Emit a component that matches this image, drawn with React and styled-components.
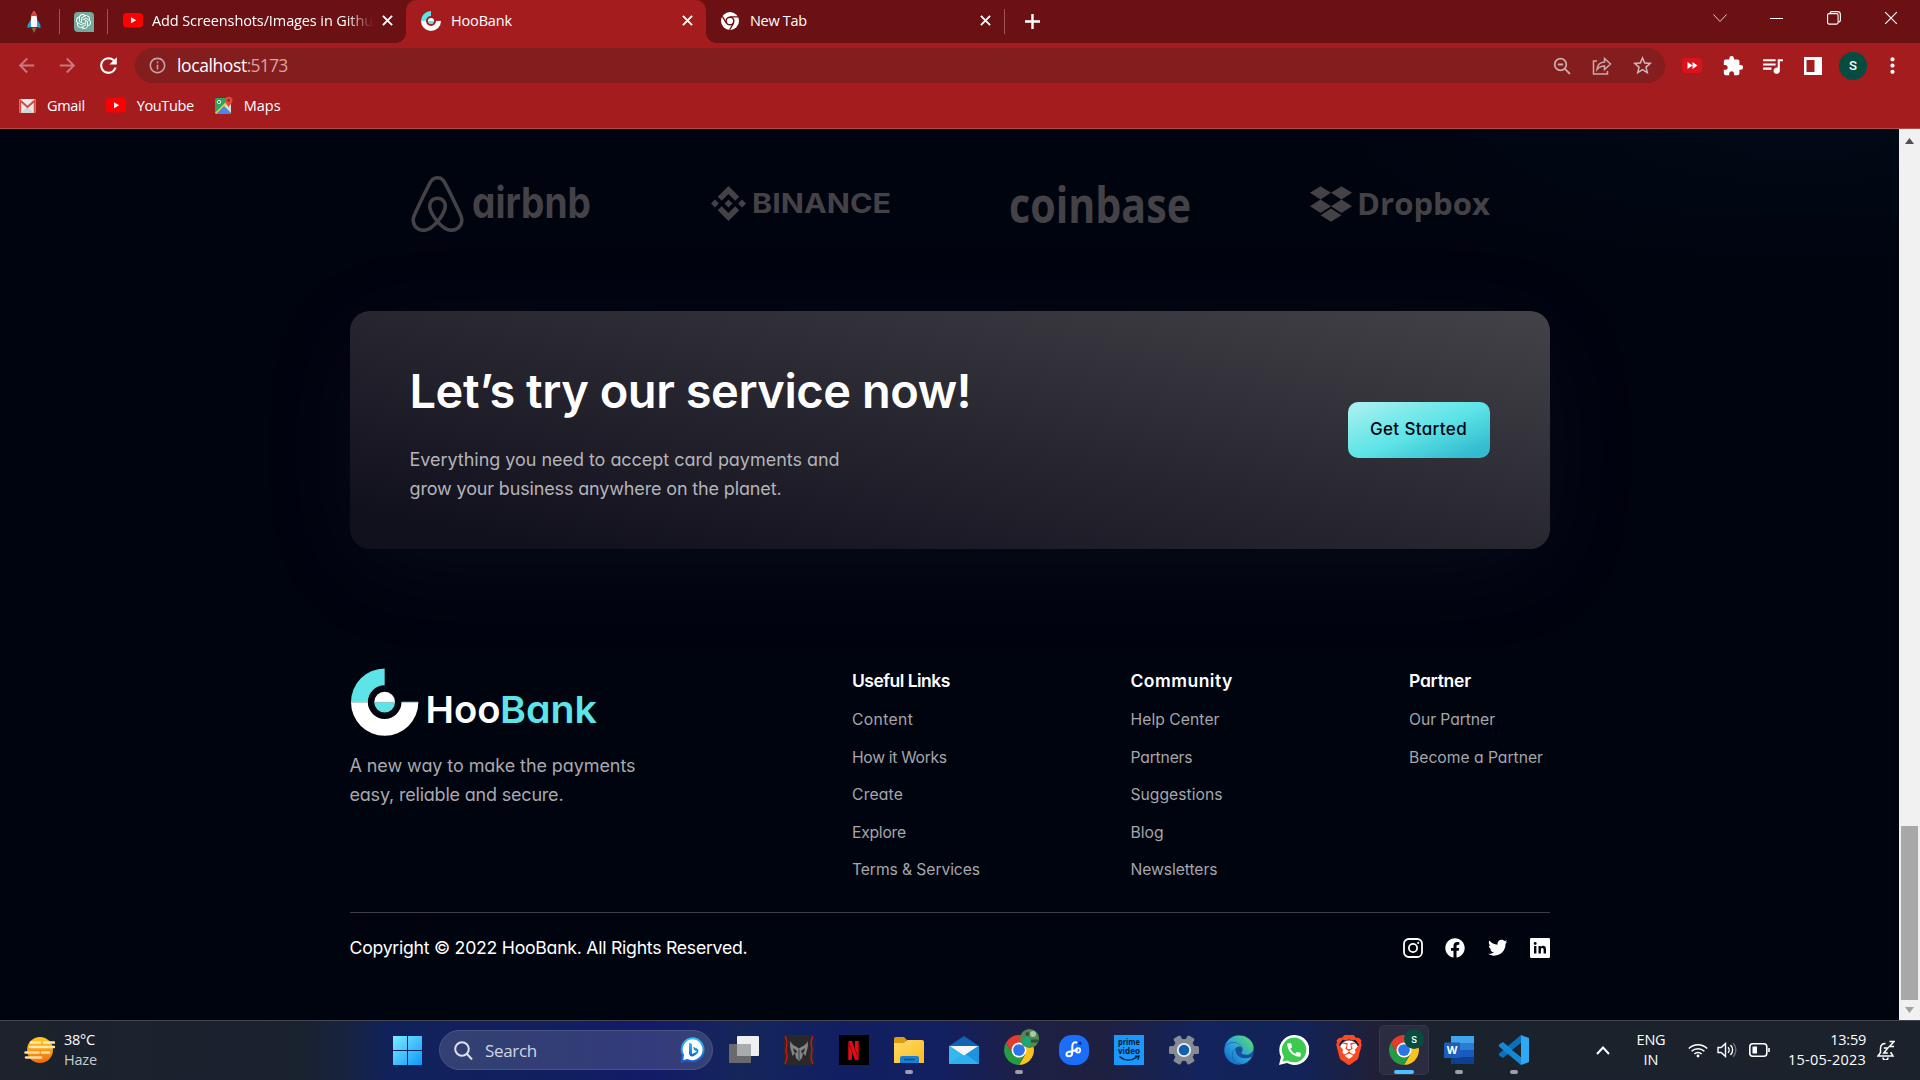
import React, { useLayoutEffect, useRef } from "react";
import styled, { createGlobalStyle, css } from "styled-components";
import {
  MdArrowBack, MdArrowForward, MdRefresh, MdInfoOutline, MdStarBorder,
  MdExtension, MdQueueMusic, MdMoreVert, MdCall,
} from "react-icons/md";
import { FaEdge, FaFacebook, FaTwitter } from "react-icons/fa";
import { SiAirbnb, SiBinance, SiDropbox, SiNetflix, SiBrave, SiOpenai } from "react-icons/si";

const brandFont = `Inter, "Open Sans", sans-serif`;
const systemFont = `"Open Sans", "Noto Sans", sans-serif`;

const GlobalStyle = createGlobalStyle`
  * { box-sizing: border-box; }
  html, body { margin: 0; padding: 0; background: #00040f; overflow: hidden; }
  svg { display: block; flex: none; }
  h1, h2, p, ul { margin: 0; padding: 0; }
`;

/* ---------- text set to a fixed measure ---------- */
const FitSpan = styled.span`
  display: inline-block;
  white-space: pre;
`;

function Fit({ w, children }) {
  const ref = useRef(null);
  useLayoutEffect(() => {
    const el = ref.current;
    el.style.letterSpacing = "0px";
    const natural = el.getBoundingClientRect().width;
    el.style.letterSpacing = `${(w - natural) / Math.max(1, children.length - 0.5)}px`;
  }, [w, children]);
  return <FitSpan ref={ref}>{children}</FitSpan>;
}

/* ---------- window ---------- */
const Screen = styled.div`
  width: 1920px;
  height: 1080px;
  display: flex;
  flex-direction: column;
  overflow: hidden;
  font-family: ${systemFont};
  color: #fff;
`;

const Slot = styled.div`
  width: ${(p) => p.$w}px;
  height: ${(p) => (p.$h ? `${p.$h}px` : "auto")};
  flex: none;
  display: flex;
  align-items: center;
  justify-content: center;
`;

/* ---------- tab strip ---------- */
const TabStrip = styled.div`
  height: 43px;
  flex: none;
  display: flex;
  align-items: center;
  padding-left: 9px;
  background: #6b1113;
`;

const Divider = styled.div`
  width: 1px;
  height: 25px;
  flex: none;
  background: #9c5658;
`;

const Tab = styled.div`
  position: relative;
  width: ${(p) => p.$w}px;
  height: 43px;
  flex: none;
  display: flex;
  align-items: center;
  gap: ${(p) => p.$gap || 9}px;
  padding: 0 13px 2px 15px;
  font-size: 14.5px;
  ${(p) => p.$active && css`
    background: #a51c1f;
    border-radius: 10px 10px 0 0;
    &::before, &::after {
      content: "";
      position: absolute;
      bottom: 0;
      width: 10px;
      height: 10px;
    }
    &::before { left: -10px; background: radial-gradient(circle at 0 0, transparent 9.5px, #a51c1f 10px); }
    &::after { right: -10px; background: radial-gradient(circle at 100% 0, transparent 9.5px, #a51c1f 10px); }
  `}
`;

const TabLabel = styled.div`
  flex: 1;
  overflow: hidden;
  white-space: nowrap;
  ${(p) => p.$fade && css`mask-image: linear-gradient(90deg, #000 88%, transparent 100%);`}
`;

const WindowControls = styled.div`
  display: flex;
  margin-left: auto;
  padding: 0 1px 7px 0;
`;

/* ---------- toolbar ---------- */
const Toolbar = styled.div`
  height: 45px;
  flex: none;
  display: flex;
  align-items: center;
  padding-left: 6px;
  background: #a51c1f;
`;

const Omnibox = styled.div`
  width: 1530px;
  height: 35px;
  margin: 0 7px 0 7px;
  padding: 0 3px 0 13px;
  display: flex;
  align-items: center;
  border-radius: 18px;
  background: #841d1e;
`;

const Address = styled.div`
  flex: 1;
  display: flex;
  margin-left: 10px;
  padding-bottom: 1px;
  font-size: 17.5px;
`;

const Port = styled.span`color: #d3a5a5;`;

const Avatar = styled.div`
  width: ${(p) => p.$size}px;
  height: ${(p) => p.$size}px;
  border-radius: 50%;
  display: flex;
  align-items: center;
  justify-content: center;
  background: #054d40;
  color: #fff;
  font: 500 ${(p) => p.$size * 0.47}px Roboto, sans-serif;
`;

const Bookmarks = styled.div`
  height: 41px;
  flex: none;
  display: flex;
  align-items: center;
  padding: 0 0 5px 19px;
  gap: 21px;
  background: #a51c1f;
  border-bottom: 1px solid #b4494c;
  font-size: 14.5px;
`;

const Bookmark = styled.div`
  display: flex;
  align-items: center;
  gap: 11px;
`;

/* ---------- page ---------- */
const Viewport = styled.div`
  height: 891px;
  flex: none;
  display: flex;
`;

const Page = styled.main`
  width: 1899px;
  display: flex;
  flex-direction: column;
  align-items: center;
  background:
    radial-gradient(ellipse 480px 140px at 1800px 0, rgba(0, 40, 60, 0.16), transparent),
    #00040f;
  font-family: ${brandFont};
  font-feature-settings: "cv11";
`;

const Container = styled.div`width: 1200px;`;

const Clients = styled.div`
  height: 106px;
  margin-top: 22px;
  padding: 0 60px;
  display: flex;
  align-items: center;
  justify-content: space-between;
  color: #444247;
`;

const ClientLogo = styled.svg`
  width: 180px;
  height: 60px;
  overflow: visible;
  fill: #444247;
`;

const Cta = styled.section`
  height: 238px;
  margin-top: 54px;
  padding: 0 60px;
  display: flex;
  align-items: center;
  justify-content: space-between;
  border-radius: 20px;
  background: linear-gradient(-168.39deg, #ffffff -278.56%, #6d6d6d -78.47%, #11101d 91.61%);
  box-shadow: 0 20px 100px -10px rgba(66, 71, 91, 0.14);
`;

const CtaText = styled.div`
  display: flex;
  flex-direction: column;
  gap: 16px;
  padding-bottom: 4px;
`;

const Heading = styled.h2`
  font-size: 47px;
  font-weight: 600;
  line-height: 76px;
`;

const Paragraph = styled.p`
  display: flex;
  flex-direction: column;
  align-items: flex-start;
  font-size: 18px;
  line-height: 29.3px;
  color: ${(p) => p.$color || "#a9a9ad"};
`;

const Button = styled.button`
  width: 142px;
  height: 56px;
  border: 0;
  padding: 0 0 2px;
  border-radius: 10px;
  font: 500 17px ${brandFont};
  font-feature-settings: "cv11";
  color: #00040f;
  background: linear-gradient(157.81deg, #def9fa -43.27%, #bef3f5 -21.24%, #9deef0 12.19%, #7de9eb 29.82%, #5ce4e7 51.94%, #33bbcf 90.29%);
`;

const FooterTop = styled.div`
  height: 245px;
  margin-top: 118px;
  display: flex;
`;

const Brand = styled.div`
  width: 502.5px;
  display: flex;
  flex-direction: column;
  gap: 11px;
`;

const LogoSvg = styled.svg`
  width: 260px;
  height: 73px;
  overflow: visible;
`;

const LinkColumn = styled.div`
  width: ${(p) => p.$w}px;
  display: flex;
  flex-direction: column;
`;

const LinkTitle = styled.h2`
  height: 28px;
  font-size: 17.5px;
  font-weight: 600;
  line-height: 28px;
`;

const LinkList = styled.ul`
  list-style: none;
  margin-top: 6px;
`;

const LinkItem = styled.li`
  height: 37.5px;
  font-size: 15.7px;
  line-height: 37.5px;
  color: #a5a6aa;
`;

const FooterBottom = styled.div`
  height: 72px;
  padding-bottom: 2px;
  display: flex;
  align-items: center;
  justify-content: space-between;
  border-top: 1px solid #3f3e45;
  font-size: 17.7px;
`;

const Socials = styled.div`
  display: flex;
  gap: 22.5px;
`;

/* ---------- scrollbar ---------- */
const Scrollbar = styled.div`
  width: 21px;
  display: flex;
  flex-direction: column;
  align-items: center;
  background: #f1f1f1;
`;

const Thumb = styled.div`
  width: 17px;
  height: 174px;
  margin-top: auto;
  background: #a8a8a8;
`;

/* ---------- taskbar ---------- */
const Taskbar = styled.footer`
  height: 60px;
  flex: none;
  display: flex;
  border-top: 1px solid #43454f;
  background: linear-gradient(90deg, #1d222c 0, #1a2230 300px, #17233f 345px, #11225a 385px, #111f60 560px, #131b68 650px, #15265a 740px, #111f62 840px, #121f60 940px, #1d2046 1020px, #1f2040 1100px, #13235c 1200px, #112358 1300px, #201f38 1375px, #1a222d 1440px, #1c222c 1920px);
`;

const Weather = styled.div`
  width: 393px;
  display: flex;
  align-items: center;
  gap: 9px;
  padding: 0 0 2px 24px;
`;

const TwoLines = styled.div`
  display: flex;
  flex-direction: column;
  align-items: ${(p) => p.$align || "flex-start"};
  font-size: 14.5px;
  line-height: 20px;
  color: ${(p) => p.$color || "#fff"};
`;

const Muted = styled.div`color: #c9cbd0;`;

const SearchBox = styled.div`
  width: 274px;
  height: 40px;
  margin: 9px 3px 0 17px;
  padding: 0 6px 0 14px;
  display: flex;
  align-items: center;
  gap: 12px;
  border-radius: 20px;
  border: 1px solid #4a5482;
  background: rgba(255, 255, 255, 0.14);
  font-size: 17px;
  color: #d2d5e2;
`;

const SearchLabel = styled.div`flex: 1;`;

const AppSlot = styled.div`
  position: relative;
  width: 55px;
  display: flex;
  align-items: center;
  justify-content: center;
  padding-bottom: 1px;
`;

const ActiveTile = styled.div`
  width: 50px;
  height: 50px;
  display: flex;
  align-items: center;
  justify-content: center;
  border-radius: 5px;
  background: #2b2c40;
  border: 1px solid #34364a;
`;

const Indicator = styled.div`
  position: absolute;
  left: 50%;
  bottom: 6px;
  width: ${(p) => (p.$active ? 20 : 8)}px;
  height: 4px;
  border-radius: 2px;
  transform: translateX(-50%);
  background: ${(p) => (p.$active ? "#4cc2ff" : "#9c9eae")};
`;

const Badge = styled.div`
  position: absolute;
  right: 7px;
  top: 8px;
`;

const PrimeTile = styled.div`
  width: 30px;
  height: 30px;
  display: flex;
  flex-direction: column;
  align-items: center;
  background: #1a98ff;
`;

const DarkTile = styled.div`
  width: 30px;
  height: 30px;
  display: flex;
  align-items: center;
  justify-content: center;
  background: #000;
`;

const Tray = styled.div`
  margin-left: auto;
  display: flex;
  align-items: center;
  padding: 0 18px 1px 0;
`;

/* ---------- drawings ---------- */
const Cross = ({ s = 11, c = "#fff", t = 2 }) => (
  <svg width={s} height={s} viewBox="0 0 12 12" stroke={c} strokeWidth={t}><path d="M1 1 11 11M11 1 1 11" /></svg>
);

const YouTubeIcon = ({ w = 20 }) => (
  <svg width={w} height={w * 0.72} viewBox="0 0 20 14.4">
    <rect width="20" height="14.4" rx="3.6" fill="#f00" /><path d="M8 4.2v6l5.2-3z" fill="#fff" />
  </svg>
);

const HooMark = ({ s }) => (
  <svg width={s} height={s} viewBox="0 0 68 68"><HooShapes /></svg>
);

const HooShapes = () => (
  <>
    <path d="M34 0A34 34 0 0 0 0 34H17A17 17 0 0 1 34 17Z" fill="#5ce4e7" />
    <path d="M0 34A34 34 0 0 0 68 34H51A17 17 0 0 1 17 34Z" fill="#fff" />
    <path d="M23.5 34a10.5 10.5 0 0 1 21 0z" fill="#fff" />
    <path d="M23.5 34a10.5 10.5 0 0 0 21 0z" fill="#5ce4e7" />
    <path d="M0 34h17M51 34h17M23.5 34h21" stroke="#b5d9dc" strokeWidth=".8" />
  </>
);

const Rocket = () => (
  <svg width="14" height="24" viewBox="0 0 14 24">
    <path d="M4.5 18h5L7 23z" fill="#16a13c" /><path d="M5.2 17.5h3.6L7 21.5z" fill="#e53935" />
    <path d="M3.5 10 .5 15v3l4-1zM10.500 10l3 5v3l-4-1z" fill="#1e9be0" />
    <path d="M7 1C4 4 3.500 8 4 17h6c.5-9 0-13-3-16z" fill="#f4f6f8" />
    <path d="M7 1C5.500 2.500 4.700 4 4.200 6h5.600C9.300 4 8.500 2.500 7 1z" fill="#e53935" />
  </svg>
);

const OpenAiTile = styled.div`
  width: 20px;
  height: 20px;
  display: flex;
  align-items: center;
  justify-content: center;
  border-radius: 4px 4px 0 4px;
  background: #74aa9c;
`;

const ChromeMono = () => (
  <svg width="18" height="18" viewBox="0 0 18 18">
    <circle cx="9" cy="9" r="9" fill="#fff" /><circle cx="9" cy="9" r="4.600" fill="#6b1113" />
    <circle cx="9" cy="9" r="3.100" fill="#fff" />
    <path d="M9 4.900h8.200M5.400 11.100 1.300 4.300M12.600 11.100 8.600 17.800" stroke="#6b1113" strokeWidth="1.300" />
  </svg>
);

const ChromeIcon = () => (
  <svg width="30" height="30" viewBox="0 0 48 48">
    <path d="M24 12h20.780A24 24 0 0 1 24 48l10.400-18z" fill="#fcc31e" />
    <path d="M3.220 12A24 24 0 0 0 24 48l10.400-18L24 24 13.600 30z" fill="#269b46" />
    <path d="M3.220 12 13.600 30 24 12h20.780A24 24 0 0 0 3.220 12z" fill="#e33b2e" />
    <circle cx="24" cy="24" r="12" fill="#fff" /><circle cx="24" cy="24" r="9.400" fill="#2d74e6" />
  </svg>
);

const GmailIcon = () => (
  <svg width="17" height="14" viewBox="0 0 17 14">
    <rect width="17" height="14" rx="1" fill="#e9e9e9" />
    <path d="M2.500 14 8.500 7l6 7" fill="#d5d5d5" /><path d="M1.200 14V1.500L8.500 8l7.300-6.500V14" fill="none" stroke="#d54b3d" strokeWidth="2" />
  </svg>
);

const MapsIcon = () => (
  <svg width="18" height="20" viewBox="0 0 18 20">
    <rect y="2" width="16" height="16" rx="1.500" fill="#2fa45a" />
    <path d="M16 4v13L9.500 10.500z" fill="#d9dbe0" />
    <path d="M0 17 13 4l2 2L2 18z" fill="#f6cf45" /><path d="m1 18 8-8 7 8z" fill="#4a86ee" />
    <circle cx="4" cy="6" r="1.700" fill="none" stroke="#dff2e6" />
    <path d="M13.500 12c0-3-3.500-4-3.500-7.500a3.700 3.700 0 0 1 7.500 0c0 3.500-4 4.500-4 7.500z" fill="#df4a3c" />
    <circle cx="13.700" cy="4.400" r="1.300" fill="#8d2a22" />
  </svg>
);

const StrokeIcon = ({ w, h = w, vb = `0 0 ${w} ${h}`, c = "#fff", t = 1.5, children }) => (
  <svg width={w} height={h} viewBox={vb} fill="none" stroke={c} strokeWidth={t}>{children}</svg>
);

const HazeIcon = () => (
  <svg width="31" height="28" viewBox="0 0 31 28">
    <defs><linearGradient id="sun" x2="0" y2="1"><stop stopColor="#ffcc1c" /><stop offset="1" stopColor="#f26a10" /></linearGradient></defs>
    <circle cx="16" cy="14" r="13" fill="url(#sun)" />
    <path d="M7 6.500h9M20 6.500h10M6 11h24" stroke="#ffe9b0" strokeWidth="2.600" strokeLinecap="round" />
    <path d="M1.500 16.500h13M18 16.500h7M2 21.500h15" stroke="#ffe0a0" strokeWidth="2.600" strokeLinecap="round" />
  </svg>
);

const WindowsIcon = () => (
  <svg width="29" height="29" viewBox="0 0 29 29">
    <defs><linearGradient id="win" x2="1" y2="1"><stop stopColor="#7cecff" /><stop offset="1" stopColor="#0c98fa" /></linearGradient></defs>
    <path d="M0 0h14v14H0zM15 0h14v14H15zM0 15h14v14H0zM15 15h14v14H15z" fill="url(#win)" />
  </svg>
);

const BingIcon = () => (
  <svg width="26" height="26" viewBox="0 0 26 26">
    <defs><linearGradient id="bing" x2="0" y2="1"><stop stopColor="#2bc4e8" /><stop offset="1" stopColor="#1560dc" /></linearGradient></defs>
    <path d="M13 1.200A11.500 11.500 0 1 1 7 23l-5 1.500L3 18A11.500 11.500 0 0 1 13 1.200z" fill="#fff" stroke="url(#bing)" strokeWidth="2" />
    <path d="M9 5.500 12 7v10l5-2.500-3-1.500-1-3c5 1 6.500 3 5 5.500-1 2-5 4-6 4s-3-1.200-3-3z" fill="url(#bing)" />
  </svg>
);

const TaskView = () => (
  <svg width="30" height="28" viewBox="0 0 30 28">
    <rect y="8" width="22" height="19" rx="1" fill="#686a6e" /><rect x="8" width="22" height="20" rx="1" fill="#efefef" />
    <rect x="8" y="8" width="14" height="12" fill="#a9aaac" />
  </svg>
);

const PredatorIcon = () => (
  <svg width="30" height="30" viewBox="0 0 30 30">
    <rect width="30" height="30" rx="3" fill="#29292c" />
    <path d="M1 1c4 8 1 10 1 14s3 6-1 14M29 1c-4 8-1 10-1 14s-3 6 1 14" stroke="#d0161c" strokeWidth="1.300" fill="none" />
    <path d="M6.500 6c1 3 3 4.500 5.500 5.500l3 2 3-2c2.500-1 4.500-2.500 5.500-5.500.8 4 .3 7-.5 9l-1.500 6-2.500-3-1 5-3 3-3-3-1-5-2.500 3L7 15c-.8-2-1.300-5-.5-9z" fill="#85868a" />
    <path d="m9 13 4 3-1 2.500-2-1.500zM21 13l-4 3 1 2.500 2-1.500z" fill="#29292c" />
    <path d="M15 14.500V25" stroke="#29292c" strokeWidth=".8" />
  </svg>
);

const FolderIcon = () => (
  <svg width="30" height="28" viewBox="0 0 30 28">
    <defs><linearGradient id="folder" x2="1" y2="1"><stop stopColor="#ffdb69" /><stop offset="1" stopColor="#fbbb1d" /></linearGradient></defs>
    <path d="M0 3a2 2 0 0 1 2-2h8l3 3h-1v6H0z" fill="#e09a12" />
    <path d="M0 7h10l3-3h15a2 2 0 0 1 2 2v21H0z" fill="url(#folder)" />
    <path d="M6 22a2 2 0 0 1 2-2h15a2 2 0 0 1 2 2v5H6z" fill="#1a7fd0" /><path d="M10 23.500h10.500" stroke="#0c4f91" strokeWidth="1.500" />
  </svg>
);

const MailIcon = () => (
  <svg width="30" height="28" viewBox="0 0 30 28">
    <path d="M0 10 15 0l15 10z" fill="#0f62b5" /><path d="M0 10h30v18H0z" fill="#35b8f2" />
    <path d="M30 10v18H0z" fill="#1c95de" /><path d="M0 28 15 17l15 11z" fill="#2fb0ee" />
    <path d="M1 10h28L15 19.500z" fill="#f5f5f5" />
  </svg>
);

const FeatherIcon = () => (
  <svg width="30" height="30" viewBox="0 0 30 30">
    <rect width="30" height="30" rx="12.500" fill="#1b6dfb" />
    <path d="M17.500 7.500c-2.800-.8-4.200 1-4.200 4v5.500c0 3.500-1.500 4.500-3.800 4.300-2.800-.3-2.800-3.800.5-4.600l8-1.700" fill="none" stroke="#fff" strokeWidth="2" strokeLinecap="round" />
    <circle cx="19" cy="15.300" r="2.200" fill="none" stroke="#fff" strokeWidth="1.800" /><circle cx="21" cy="8.200" r="1.700" fill="#0c3ca0" />
  </svg>
);

const PrimeDrawing = () => (
  <svg width="30" height="30" viewBox="0 0 30 30" fill="#051b33" fontFamily="Open Sans" fontWeight="700" fontSize="9">
    <text x="4" y="9.500" textLength="22" lengthAdjust="spacingAndGlyphs">prime</text>
    <text x="4" y="18.500" textLength="22" lengthAdjust="spacingAndGlyphs">video</text>
    <path d="M5.500 21.500c5.500 4.500 12 4.500 17.500.5M21 21.300h4l-1.200 3.500" fill="none" stroke="#051b33" strokeWidth="1.400" />
  </svg>
);

const GearIcon = () => (
  <svg width="30" height="30" viewBox="0 0 30 30">
    <g fill="#858b93">
      {[0, 60, 120].map((a) => <rect key={a} x="11" y="0" width="8" height="30" rx="1.500" transform={`rotate(${a + 30} 15 15)`} />)}
      <circle cx="15" cy="15" r="11" />
    </g>
    <circle cx="15" cy="15" r="6.200" fill="#0f5fae" stroke="#eef0f2" strokeWidth="1.800" />
  </svg>
);

const EdgeStack = styled.div`
  display: flex;
  border-radius: 50%;
  background: #164f9c;
`;

const EdgeIcon = () => (
  <EdgeStack>
    <svg width="0" height="0"><defs><linearGradient id="edge" x1="0" y1="1" x2="1" y2="0">
      <stop stopColor="#0f5bb8" /><stop offset=".45" stopColor="#2aa0de" /><stop offset="1" stopColor="#63e45c" />
    </linearGradient></defs></svg>
    <FaEdge size={30} fill="url(#edge)" />
  </EdgeStack>
);

const WhatsAppBubble = styled.div`
  display: grid;
  place-items: center;
  > * { grid-area: 1 / 1; }
`;

const WhatsAppIcon = () => (
  <WhatsAppBubble>
    <svg width="30" height="30" viewBox="0 0 30 30">
      <path d="M15 0a15 15 0 1 1-7 28L0 30l2-8A15 15 0 0 1 15 0z" fill="#fff" />
      <path d="M15 2.500a12.400 12.400 0 1 1-6.500 23L3.600 26.500l1.300-4.800A12.400 12.400 0 0 1 15 2.500z" fill="#3ec951" />
    </svg>
    <MdCall size={18} color="#fff" />
  </WhatsAppBubble>
);

const BraveShield = styled.div`
  display: flex;
  background: radial-gradient(circle, #fff 9px, transparent 10px);
`;

const WordIcon = () => (
  <svg width="30" height="28" viewBox="0 0 30 28">
    <path d="M7 0h23v7H7z" fill="#41a5ee" /><path d="M7 7h23v7H7z" fill="#2b7cd3" />
    <path d="M7 14h23v7H7z" fill="#185abd" /><path d="M7 21h23v7H7z" fill="#103f91" />
    <rect y="6.500" width="16" height="15.500" rx="1" fill="#1a5dbe" />
    <text x="8" y="18.300" textAnchor="middle" fontFamily="Open Sans" fontWeight="700" fontSize="11" fill="#fff">W</text>
  </svg>
);

const CodeIcon = () => (
  <svg width="30" height="30" viewBox="0 0 30 30">
    <path d="M22 8 4 23 0 20.500v-2L22 0z" fill="#0a70bc" /><path d="M22 22 4 7 0 9.500v2L22 30z" fill="#1489d3" />
    <path d="m22 0 8 3v24l-8 3z" fill="#2ba9f1" />
    <path d="m22 8-9 7 9 7z" fill="#1b2430" />
  </svg>
);

const LinkedInIcon = () => (
  <svg width="20" height="20" viewBox="0 0 20 20">
    <rect width="20" height="20" rx="1.200" fill="#fff" />
    <path d="M4 8h2.400v7.500H4zM8.500 8h2.300v1.100c1.400-2 5.200-1.700 5.200 2v4.400h-2.400v-4c0-2.200-2.700-2-2.700 0v4H8.500z" fill="#00040f" />
    <circle cx="5.200" cy="5.500" r="1.400" fill="#00040f" />
  </svg>
);

const PhotoBadge = () => (
  <svg width="19" height="19" viewBox="0 0 19 19">
    <circle cx="9.500" cy="9.500" r="9.500" fill="#4f8a50" /><circle cx="13" cy="5" r="3" fill="#a9c7a9" />
    <path d="M2 15c1-7 3-8 5-8s4 2 3 11z" fill="#18a779" /><circle cx="7.500" cy="5" r="2" fill="#563f38" />
    <path d="M11 12h7" stroke="#28542f" strokeWidth="3" />
  </svg>
);

/* ---------- data ---------- */
const linkColumns = [
  { title: ["Useful Links", 98], w: 278.5, links: [["Content", 61], ["How it Works", 95], ["Create", 51], ["Explore", 54], ["Terms & Services", 128]] },
  { title: ["Community", 102], w: 278.5, links: [["Help Center", 89], ["Partners", 62], ["Suggestions", 92], ["Blog", 33], ["Newsletters", 87]] },
  { title: ["Partner", 62], w: 140, links: [["Our Partner", 86], ["Become a Partner", 134]] },
];

const taskApps = [
  { id: "view", icon: <TaskView /> },
  { id: "predator", icon: <PredatorIcon /> },
  { id: "netflix", icon: <DarkTile><SiNetflix size={19} color="#e50914" /></DarkTile> },
  { id: "files", icon: <FolderIcon />, open: true },
  { id: "mail", icon: <MailIcon /> },
  { id: "chrome", icon: <ChromeIcon />, open: true, badge: <PhotoBadge /> },
  { id: "feather", icon: <FeatherIcon /> },
  { id: "prime", icon: <PrimeTile><PrimeDrawing /></PrimeTile> },
  { id: "settings", icon: <GearIcon /> },
  { id: "edge", icon: <EdgeIcon /> },
  { id: "whatsapp", icon: <WhatsAppIcon /> },
  { id: "brave", icon: <BraveShield><SiBrave size={30} color="#fb4a22" /></BraveShield> },
  { id: "chrome-active", icon: <ActiveTile><ChromeIcon /></ActiveTile>, open: true, active: true, badge: <Avatar $size={20}>S</Avatar> },
  { id: "word", icon: <WordIcon />, open: true },
  { id: "code", icon: <CodeIcon />, open: true },
];

/* ---------- sections ---------- */
function BrowserChrome() {
  return (
    <>
      <TabStrip>
        <Slot $w={50}><Rocket /></Slot>
        <Divider />
        <Slot $w={47}><OpenAiTile><SiOpenai size={15} color="#fff" /></OpenAiTile></Slot>
        <Divider />
        <Tab $w={298} $gap={9}>
          <YouTubeIcon />
          <TabLabel $fade><Fit w={221}>Add Screenshots/Images in Githu</Fit></TabLabel>
          <Cross />
        </Tab>
        <Tab $w={300} $gap={10} $active>
          <HooMark s={20} />
          <TabLabel><Fit w={61}>HooBank</Fit></TabLabel>
          <Cross />
        </Tab>
        <Tab $w={298} $gap={11}>
          <ChromeMono />
          <TabLabel><Fit w={57}>New Tab</Fit></TabLabel>
          <Cross />
        </Tab>
        <Divider />
        <Slot $w={55}><StrokeIcon w={15} t={2.4}><path d="M7.500 0v15M0 7.500h15" /></StrokeIcon></Slot>
        <WindowControls>
          <Slot $w={57}><StrokeIcon w={14} h={8} t={1} c="#e0c8c8"><path d="m.5.500 6.500 7 6.500-7" /></StrokeIcon></Slot>
          <Slot $w={57}><StrokeIcon w={13} h={1} t={1}><path d="M0 .5h13" /></StrokeIcon></Slot>
          <Slot $w={57}>
            <StrokeIcon w={14} t={1.1}><rect x=".6" y="2.600" width="10.500" height="10.500" rx="1.500" /><path d="M3 2.500C3 1 4 .6 5 .6h5.500a2.900 2.900 0 0 1 2.900 2.900V9c0 1-.4 2-2 2" /></StrokeIcon>
          </Slot>
          <Slot $w={57}><Cross s={14} t={1} /></Slot>
        </WindowControls>
      </TabStrip>
      <Toolbar>
        <Slot $w={41}><MdArrowBack size={23} color="#c9797b" /></Slot>
        <Slot $w={41}><MdArrowForward size={23} color="#c9797b" /></Slot>
        <Slot $w={40}><MdRefresh size={25} /></Slot>
        <Omnibox>
          <MdInfoOutline size={19} color="#c3a5a8" />
          <Address><Fit w={70}>localhost</Fit><Port><Fit w={41}>:5173</Fit></Port></Address>
          <Slot $w={40}>
            <StrokeIcon w={18} c="#c9abab" t={1.800}><circle cx="7.500" cy="7.500" r="5.800" /><path d="m11.700 11.700 5.300 5.300M4.800 7.500h5.400" /></StrokeIcon>
          </Slot>
          <Slot $w={40}>
            <StrokeIcon w={20} c="#c9abab"><path d="M5 5H1.500v13h14v-3M5 13.500C5.500 8.500 8 6.200 12.500 6V2.500L18.500 8l-6 5.500V10C9 10 7 11 5 13.500z" /></StrokeIcon>
          </Slot>
          <Slot $w={40}><MdStarBorder size={23} color="#d0b5b5" /></Slot>
        </Omnibox>
        <Slot $w={40}>
          <svg width="20" height="15" viewBox="0 0 20 15"><rect width="20" height="15" rx="4" fill="#d9121c" /><path d="M5.500 4v7l5-3.500zM10.500 4v7l5-3.500z" fill="#fff" /></svg>
        </Slot>
        <Slot $w={41}><MdExtension size={22} /></Slot>
        <Slot $w={39}><MdQueueMusic size={25} /></Slot>
        <Slot $w={41}>
          <svg width="18" height="18" viewBox="0 0 18 18"><path d="M0 0h18v18H0zM2.500 3v12h8V3z" fill="#fff" fillRule="evenodd" /></svg>
        </Slot>
        <Slot $w={40}><Avatar $size={28}>S</Avatar></Slot>
        <Slot $w={39}><MdMoreVert size={25} /></Slot>
      </Toolbar>
      <Bookmarks>
        <Bookmark><GmailIcon /><Fit w={38}>Gmail</Fit></Bookmark>
        <Bookmark><YouTubeIcon /><Fit w={57}>YouTube</Fit></Bookmark>
        <Bookmark><MapsIcon /><Fit w={37}>Maps</Fit></Bookmark>
      </Bookmarks>
    </>
  );
}

function ClientRow() {
  return (
    <Clients>
      <ClientLogo viewBox="0 0 180 60">
        <SiAirbnb x="-.5" y="2" size={56} />
        <text x="62" y="44" fontFamily="Inter" fontWeight="700" fontSize="43" textLength="119" lengthAdjust="spacingAndGlyphs">airbnb</text>
      </ClientLogo>
      <ClientLogo viewBox="0 0 180 60">
        <SiBinance x="1" y="12" size={35} />
        <text x="42" y="39" fontFamily="Inter" fontWeight="700" fontSize="27" textLength="139" lengthAdjust="spacingAndGlyphs">BINANCE</text>
      </ClientLogo>
      <ClientLogo viewBox="0 0 180 60">
        <text x="-1" y="49" fontFamily="Open Sans" fontWeight="700" fontSize="51" textLength="182" lengthAdjust="spacingAndGlyphs">coinbase</text>
      </ClientLogo>
      <ClientLogo viewBox="0 0 180 60">
        <SiDropbox x="0" y="9" size={42} />
        <text x="47" y="41" fontFamily="Open Sans" fontWeight="700" fontSize="31" textLength="133" lengthAdjust="spacingAndGlyphs">Dropbox</text>
      </ClientLogo>
    </Clients>
  );
}

function Footer() {
  return (
    <>
      <FooterTop>
        <Brand>
          <LogoSvg viewBox="0 0 260 73">
            <g transform="translate(1 1.500) scale(.99)"><HooShapes /></g>
            <text y="56" fontFamily="Inter" fontWeight="600" fontSize="37.500">
              <tspan x="75.500" fill="#fff" textLength="75" lengthAdjust="spacingAndGlyphs">Hoo</tspan>
              <tspan x="150" fill="#5ce4e7" textLength="97" lengthAdjust="spacingAndGlyphs">Bank</tspan>
            </text>
          </LogoSvg>
          <Paragraph><Fit w={286}>A new way to make the payments</Fit><Fit w={214}>easy, reliable and secure.</Fit></Paragraph>
        </Brand>
        {linkColumns.map(({ title, w, links }) => (
          <LinkColumn key={title[0]} $w={w}>
            <LinkTitle><Fit w={title[1]}>{title[0]}</Fit></LinkTitle>
            <LinkList>
              {links.map(([name, width]) => <LinkItem key={name}><Fit w={width}>{name}</Fit></LinkItem>)}
            </LinkList>
          </LinkColumn>
        ))}
      </FooterTop>
      <FooterBottom>
        <Fit w={398}>Copyright © 2022 HooBank. All Rights Reserved.</Fit>
        <Socials>
          <StrokeIcon w={20} t={1.800}><rect x="1" y="1" width="18" height="18" rx="4.800" /><circle cx="10" cy="10" r="4.100" /><circle cx="15.200" cy="4.900" r=".7" fill="#fff" stroke="#fff" strokeWidth="1" /></StrokeIcon>
          <FaFacebook size={20} />
          <FaTwitter size={19.500} />
          <LinkedInIcon />
        </Socials>
      </FooterBottom>
    </>
  );
}

function WindowsTaskbar() {
  return (
    <Taskbar>
      <Weather>
        <HazeIcon />
        <TwoLines><Fit w={31}>38°C</Fit><Muted><Fit w={33}>Haze</Fit></Muted></TwoLines>
      </Weather>
      <Slot $w={29}><WindowsIcon /></Slot>
      <SearchBox>
        <StrokeIcon w={19} c="#dfe2ec" t={2}><circle cx="8" cy="8" r="6.800" /><path d="m13 13 5 5.500" /></StrokeIcon>
        <SearchLabel><Fit w={52}>Search</Fit></SearchLabel>
        <BingIcon />
      </SearchBox>
      {taskApps.map(({ id, icon, open, active, badge }) => (
        <AppSlot key={id}>
          {icon}
          {badge && <Badge>{badge}</Badge>}
          {open && <Indicator $active={active} />}
        </AppSlot>
      ))}
      <Tray>
        <Slot $w={46}><StrokeIcon w={14} h={9} t={2}><path d="m1 8 6-6.500L13 8" /></StrokeIcon></Slot>
        <Slot $w={50}><TwoLines $align="center"><Fit w={29}>ENG</Fit><Fit w={15}>IN</Fit></TwoLines></Slot>
        <Slot $w={44}>
          <StrokeIcon w={20} h={16} t={1.500}><path d="M.8 6.500a13 13 0 0 1 18.400 0M3.600 9.300a9 9 0 0 1 12.800 0M6.400 12a5 5 0 0 1 7.200 0" /><circle cx="10" cy="14" r="1.400" fill="#fff" stroke="none" /></StrokeIcon>
        </Slot>
        <Slot $w={14}>
          <StrokeIcon w={20} h={16} t={1.400}><path d="M1 5.500h3.200L8.500 1.500v13L4.200 10.500H1zM11 5.200a4 4 0 0 1 0 5.600M13.500 3a7 7 0 0 1 0 10" /><path d="M16.200 1.200a10 10 0 0 1 0 13.600" stroke="#6b707a" /></StrokeIcon>
        </Slot>
        <Slot $w={50}>
          <StrokeIcon w={21} h={14} t={1.600}><rect x=".8" y=".8" width="17" height="12.400" rx="3" /><path d="M20 5v4" /><path d="M3.500 3.500H8v7H3.500z" fill="#fff" stroke="none" /></StrokeIcon>
        </Slot>
        <Slot $w={86}><TwoLines $align="flex-end"><Fit w={36}>13:59</Fit><Fit w={78}>15-05-2023</Fit></TwoLines></Slot>
        <Slot $w={32}>
          <StrokeIcon w={18} h={20} t={1.500}><path d="M8.500 3.600C5.500 3.600 3.500 5.500 3.500 8.500v4L1 16h15l-2-3v-1M6 17.500a2.500 2.500 0 0 0 5 0M6.800 8h4l-4 5h4M12.500 1.500H17L12.500 6.500H17" /></StrokeIcon>
        </Slot>
      </Tray>
    </Taskbar>
  );
}

export default function App() {
  return (
    <Screen>
      <GlobalStyle />
      <BrowserChrome />
      <Viewport>
        <Page>
          <Container>
            <ClientRow />
            <Cta>
              <CtaText>
                <Heading><Fit w={562}>Let’s try our service now!</Fit></Heading>
                <Paragraph $color="#b4b4b8">
                  <Fit w={430}>Everything you need to accept card payments and</Fit>
                  <Fit w={372}>grow your business anywhere on the planet.</Fit>
                </Paragraph>
              </CtaText>
              <Button><Fit w={97}>Get Started</Fit></Button>
            </Cta>
            <Footer />
          </Container>
        </Page>
        <Scrollbar>
          <Slot $w={21} $h={24}><svg width="9" height="6" viewBox="0 0 9 6"><path d="M0 6 4.500 0 9 6z" fill="#505050" /></svg></Slot>
          <Thumb />
          <Slot $w={21} $h={20}><svg width="9" height="6" viewBox="0 0 9 6"><path d="M0 0h9L4.500 6z" fill="#a0a0a0" /></svg></Slot>
        </Scrollbar>
      </Viewport>
      <WindowsTaskbar />
    </Screen>
  );
}
